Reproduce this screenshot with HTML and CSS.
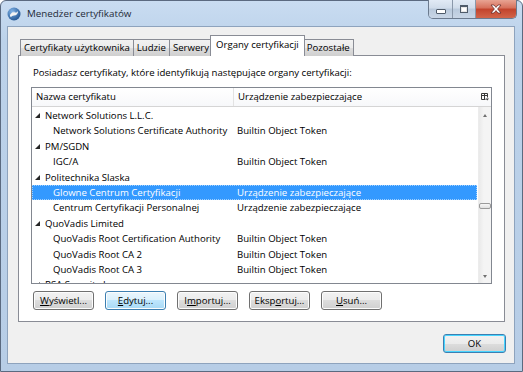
FILE: index.html
```html
<!DOCTYPE html>
<html lang="pl">
  <head>
    <meta charset="UTF-8" />
    <meta name="viewport" content="width=device-width, initial-scale=1.0" />
    <title>Menedżer certyfikatów</title>
    <link rel="stylesheet" href="styles.css">
  </head>
  <body>
    <div class="window">
      <div class="titlebar">
        <svg class="app-icon" width="14" height="14" viewBox="0 0 14 14">
          <defs>
            <radialGradient id="globe" cx="0.35" cy="0.3" r="0.8">
              <stop offset="0" stop-color="#7fb2e6" />
              <stop offset="1" stop-color="#1d4f8c" />
            </radialGradient>
          </defs>
          <circle cx="7" cy="7" r="6.5" fill="url(#globe)" />
          <path d="M3 8c1-2 3-3 5-2.5c1.5.4 2.5-.5 3-1.5c.2 2.5-1.5 4.5-4 4.6c-1.5.1-2.5.6-3 1.6c-.8-.6-1.1-1.3-1-2.2z" fill="#f4f4f4" />
          <path d="M4.5 6.2c.8-.9 2-1.2 3.2-1" stroke="#dfe8f2" stroke-width="0.8" fill="none" />
        </svg>
        <span class="title">Menedżer certyfikatów</span>
        <div class="caption-buttons">
          <div class="cap cap-min"><span class="min-glyph"></span></div>
          <div class="cap cap-max"><span class="max-glyph"></span></div>
          <div class="cap cap-close">
            <svg width="14" height="10" viewBox="0 0 14 10">
              <path d="M2 1h3l2 2.4L9 1h3L8.6 5L12 9H9L7 6.6L5 9H2l3.4-4z" fill="#fff" stroke="#5a2020" stroke-width="0.7" stroke-linejoin="round" />
            </svg>
          </div>
        </div>
      </div>

      <div class="client">
        <div class="tabs">
          <div class="tab">Certyfikaty użytkownika</div>
          <div class="tab">Ludzie</div>
          <div class="tab">Serwery</div>
          <div class="tab tab-active">Organy certyfikacji</div>
          <div class="tab">Pozostałe</div>
        </div>

        <div class="panel">
          <p class="intro">Posiadasz certyfikaty, które identyfikują następujące organy certyfikacji:</p>

          <div class="tree">
            <div class="tree-head">
              <div class="col-name">Nazwa certyfikatu</div>
              <div class="col-device">Urządzenie zabezpieczające</div>
              <div class="col-picker">
                <svg width="8" height="8" viewBox="0 0 8 8">
                  <path d="M0.5 0.5h6v4M0.5 0.5v6h4M0.5 2.5h6M3.5 0.5v6" stroke="#3a3a3a" stroke-width="1" fill="none" />
                  <path d="M4.5 5.5h3.5L6.25 7.5z" fill="#3a3a3a" />
                </svg>
              </div>
            </div>
            <div class="tree-body">
              <div class="rows">
                <div class="row group"><span class="twisty"></span>Network Solutions L.L.C.</div>
                <div class="row"><span class="name">Network Solutions Certificate Authority</span><span class="device">Builtin Object Token</span></div>
                <div class="row group"><span class="twisty"></span>PM/SGDN</div>
                <div class="row"><span class="name">IGC/A</span><span class="device">Builtin Object Token</span></div>
                <div class="row group"><span class="twisty"></span>Politechnika Slaska</div>
                <div class="row selected"><span class="name">Glowne Centrum Certyfikacji</span><span class="device">Urządzenie zabezpieczające</span></div>
                <div class="row"><span class="name">Centrum Certyfikacji Personalnej</span><span class="device">Urządzenie zabezpieczające</span></div>
                <div class="row group"><span class="twisty"></span>QuoVadis Limited</div>
                <div class="row"><span class="name">QuoVadis Root Certification Authority</span><span class="device">Builtin Object Token</span></div>
                <div class="row"><span class="name">QuoVadis Root CA 2</span><span class="device">Builtin Object Token</span></div>
                <div class="row"><span class="name">QuoVadis Root CA 3</span><span class="device">Builtin Object Token</span></div>
                <div class="row group"><span class="twisty"></span>RSA Security Inc</div>
              </div>
              <div class="scrollbar">
                <span class="arrow-up"></span>
                <span class="thumb"></span>
                <span class="arrow-down"></span>
              </div>
            </div>
          </div>

          <div class="actions">
            <button class="btn"><u>W</u>yświetl...</button>
            <button class="btn btn-hot"><u>E</u>dytuj...</button>
            <button class="btn">I<u>m</u>portuj...</button>
            <button class="btn">Eksp<u>o</u>rtuj...</button>
            <button class="btn"><u>U</u>suń...</button>
          </div>
        </div>

        <div class="footer">
          <button class="btn btn-default">OK</button>
        </div>
      </div>
    </div>
  </body>
</html>
```

FILE: styles.css
```css
html, body {
  margin: 0;
  padding: 0;
}
body {
  width: 523px;
  height: 372px;
  overflow: hidden;
  font-family: "Segoe UI", "Open Sans", "Noto Sans", sans-serif;
  font-size: 9.6px;
  color: #000;
}
.window {
  box-sizing: border-box;
  width: 523px;
  height: 372px;
  border: 1px solid #5b6a80;
  border-radius: 6px 6px 0 0;
  background: linear-gradient(#c9dcf1, #bcd2ea 40px, #b7cde6);
  display: flex;
  flex-direction: column;
}
.titlebar {
  height: 25px;
  display: flex;
  align-items: center;
  padding-left: 6px;
}
.app-icon {
  flex: none;
  margin-top: 1px;
}
.title {
  margin-left: 6px;
  font-size: 9.8px;
  color: #1e2a38;
}
.caption-buttons {
  margin-left: auto;
  margin-right: 5px;
  align-self: flex-start;
  margin-top: -1px;
  display: flex;
  height: 18px;
  border: 1px solid #6b7a8e;
  border-top: none;
  border-radius: 0 0 5px 5px;
  overflow: hidden;
}
.cap {
  display: flex;
  align-items: center;
  justify-content: center;
  background: linear-gradient(#e1eaf5, #d0dcea 45%, #b9c9dc 50%, #c9d6e6);
}
.cap-min {
  width: 23px;
  border-right: 1px solid #8a98aa;
}
.cap-max {
  width: 22px;
  border-right: 1px solid #8a98aa;
}
.cap-close {
  width: 40px;
  background: linear-gradient(#e8a493, #d66f5a 45%, #c2432c 50%, #d2654a);
}
.min-glyph {
  width: 8px;
  height: 3px;
  margin-top: 5px;
  background: #fff;
  border: 1px solid #4f5b6a;
  border-radius: 1px;
}
.max-glyph {
  width: 6px;
  height: 5px;
  border: 1px solid #4f5b6a;
  border-top-width: 2px;
  background: #fff;
  box-shadow: inset 0 0 0 1px #e6e6e6;
}

.client {
  flex: 1;
  margin: 0 7px 7px 6px;
  border: 1px solid #8ea3bd;
  background: #f0f0f0;
  display: flex;
  flex-direction: column;
}

.tabs {
  display: flex;
  align-items: flex-end;
  margin: 9px 0 0 10px;
  padding-left: 2px;
  height: 20px;
  position: relative;
  z-index: 1;
  margin-bottom: -1px;
}
.tab {
  box-sizing: border-box;
  height: 17px;
  padding: 0 3px;
  line-height: 15px;
  border: 1px solid #898c95;
  border-bottom: none;
  margin-right: -1px;
  background: linear-gradient(#f2f2f2, #ebebeb 50%, #dddddd 50%, #cfcfcf);
  white-space: nowrap;
}
.tab-active {
  height: 21px;
  padding: 0 5px;
  margin: 0 -1px 0 -2px;
  line-height: 17px;
  background: #fff;
  position: relative;
}
.tab-active + .tab {
  margin-left: -1px;
}

.panel {
  margin-left: 10px;
  width: 487px;
  height: 267px;
  box-sizing: border-box;
  border: 1px solid #898c95;
  background: #fff;
  display: flex;
  flex-direction: column;
}
.intro {
  margin: 10px 0 0 14px;
  line-height: 14px;
}

.tree {
  margin: 7px 0 0 12px;
  width: 461px;
  height: 197px;
  box-sizing: border-box;
  border: 1px solid #828790;
  display: flex;
  flex-direction: column;
}
.tree-head {
  display: flex;
  height: 18px;
  border-bottom: 1px solid #d5d5d5;
  background: linear-gradient(#ffffff, #f7f8fa);
  line-height: 17px;
}
.col-name {
  width: 201px;
  padding-left: 4px;
  box-sizing: border-box;
}
.col-device {
  width: 246px;
  padding-left: 4px;
  box-sizing: border-box;
  border-left: 1px solid #e3e3e3;
}
.col-picker {
  width: 12px;
  display: flex;
  align-items: center;
  justify-content: center;
}
.tree-body {
  flex: 1;
  display: flex;
  min-height: 0;
}
.rows {
  width: 447px;
  padding-top: 1px;
  overflow: hidden;
}
.row {
  display: flex;
  height: 15.4px;
  line-height: 15.4px;
  white-space: nowrap;
  margin-right: 1px;
}
.row .name {
  width: 180px;
  padding-left: 21px;
}
.row .device {
  padding-left: 4px;
}
.row.group {
  padding-left: 3px;
}
.twisty {
  width: 7px;
  height: 5px;
  margin: 5px 3px 0 0;
  position: relative;
}
.twisty::after {
  content: "";
  position: absolute;
  left: 0;
  top: 0;
  border-style: solid;
  border-width: 0 0 5px 5px;
  border-color: transparent transparent #262626 transparent;
}
.row.selected {
  background: #3399ff;
  color: #fff;
  outline: 1px dotted #9fd0ff;
  outline-offset: -1px;
}

.scrollbar {
  width: 12px;
  border-left: 1px solid #ececec;
  background: linear-gradient(90deg, #e9e9e9, #f4f4f4 40%, #f4f4f4);
  display: flex;
  flex-direction: column;
  align-items: center;
}
.arrow-up,
.arrow-down {
  width: 0;
  height: 0;
  border-left: 2.5px solid transparent;
  border-right: 2.5px solid transparent;
}
.arrow-up {
  margin-top: 7px;
  border-bottom: 3px solid #707070;
}
.arrow-down {
  margin-top: auto;
  margin-bottom: 5px;
  border-top: 3px solid #707070;
}
.thumb {
  margin-top: 86px;
  width: 10px;
  height: 4px;
  border: 1px solid #9a9a9a;
  border-radius: 2px;
  background: linear-gradient(#f7f7f7, #e0e0e0);
}

.actions {
  display: flex;
  gap: 11px;
  margin: 7px 0 0 14px;
}
.btn {
  width: 61px;
  height: 19px;
  padding: 0;
  box-sizing: border-box;
  font: inherit;
  color: #000;
  border: 1px solid #707070;
  border-radius: 3px;
  background: linear-gradient(#f2f2f2, #ebebeb 50%, #dddddd 50%, #cfcfcf);
  box-shadow: inset 0 0 0 1px #fcfcfc;
}
.btn u {
  text-decoration-thickness: 1px;
  text-underline-offset: 1px;
}
.btn-hot {
  border-color: #3c7fb1;
  background: linear-gradient(#eaf6fd, #d9f0fc 50%, #bee6fd 50%, #a7d9f5);
}
.footer {
  display: flex;
  justify-content: flex-end;
  margin: 12px 8px 0 0;
}
.btn-default {
  width: 63px;
  border-color: #3c7fb1;
  box-shadow: inset 0 0 0 1px #48d5ff;
}
```
